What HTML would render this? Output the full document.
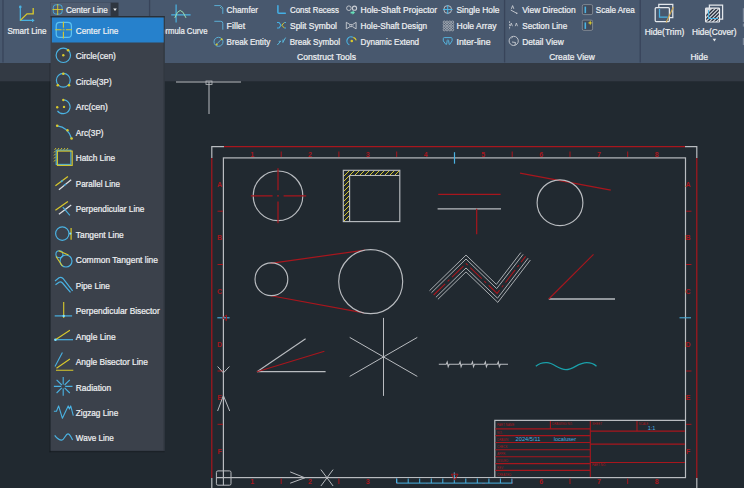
<!DOCTYPE html><html><head><meta charset="utf-8"><style>html,body{margin:0;padding:0;background:#212930;overflow:hidden}svg{display:block}text{font-family:"Liberation Sans",sans-serif}</style></head><body>
<svg width="744" height="488" viewBox="0 0 744 488">
<rect x="0" y="0" width="744" height="488" fill="#212930"/>
<rect x="0" y="0" width="744" height="63" fill="#48586e"/>
<rect x="0" y="63" width="744" height="18.3" fill="#333a44"/>
<line x1="3" y1="0" x2="3" y2="62.5" stroke="#38445a" stroke-width="1.3"/>
<line x1="149.6" y1="0" x2="149.6" y2="62.5" stroke="#38445a" stroke-width="1.3"/>
<line x1="504.6" y1="0" x2="504.6" y2="62.5" stroke="#38445a" stroke-width="1.3"/>
<line x1="640.2" y1="0" x2="640.2" y2="62.5" stroke="#38445a" stroke-width="1.3"/>
<g fill="none" stroke-linecap="butt">
<line x1="176" y1="82" x2="241" y2="82" stroke="#b9bcc0" stroke-width="1"/>
<line x1="209" y1="82" x2="209" y2="114" stroke="#b9bcc0" stroke-width="1"/>
<rect x="206" y="81" width="6" height="3.5" stroke="#b9bcc0" stroke-width="0.8"/>
<path d="M211.8,158 V478 M224,146.6 H685 M696.8,158 V478" stroke="#a8161d" stroke-width="1.2"/>
<path d="M211.8,158 V146.6 H224" stroke="#b9bcc0" stroke-width="1.2"/>
<path d="M685,146.6 H696.8 V158" stroke="#b9bcc0" stroke-width="1.2"/>
<path d="M211.8,478 V490" stroke="#b9bcc0" stroke-width="1.2"/>
<path d="M696.8,478 V490" stroke="#b9bcc0" stroke-width="1.2"/>
<rect x="223.4" y="157.9" width="462.1" height="319.70000000000005" stroke="#b9bcc0" stroke-width="1.2"/>
</g>
<g font-size="7" fill="#a8161d" font-weight="bold">
<text x="252.3" y="156.9" text-anchor="middle">1</text>
<text x="252.3" y="483.6" text-anchor="middle">1</text>
<text x="310.0" y="156.9" text-anchor="middle">2</text>
<text x="310.0" y="483.6" text-anchor="middle">2</text>
<text x="367.8" y="156.9" text-anchor="middle">3</text>
<text x="367.8" y="483.6" text-anchor="middle">3</text>
<text x="425.6" y="156.9" text-anchor="middle">4</text>
<text x="425.6" y="483.6" text-anchor="middle">4</text>
<text x="483.3" y="156.9" text-anchor="middle">5</text>
<text x="483.3" y="483.6" text-anchor="middle">5</text>
<text x="541.1" y="156.9" text-anchor="middle">6</text>
<text x="541.1" y="483.6" text-anchor="middle">6</text>
<text x="598.9" y="156.9" text-anchor="middle">7</text>
<text x="598.9" y="483.6" text-anchor="middle">7</text>
<text x="656.6" y="156.9" text-anchor="middle">8</text>
<text x="656.6" y="483.6" text-anchor="middle">8</text>
<text x="219.6" y="187.1" text-anchor="middle">A</text>
<text x="688.1" y="187.1" text-anchor="middle">A</text>
<text x="219.6" y="240.4" text-anchor="middle">B</text>
<text x="688.1" y="240.4" text-anchor="middle">B</text>
<text x="219.6" y="293.7" text-anchor="middle">C</text>
<text x="688.1" y="293.7" text-anchor="middle">C</text>
<text x="219.6" y="347.0" text-anchor="middle">D</text>
<text x="688.1" y="347.0" text-anchor="middle">D</text>
<text x="219.6" y="400.3" text-anchor="middle">E</text>
<text x="688.1" y="400.3" text-anchor="middle">E</text>
<text x="219.6" y="453.6" text-anchor="middle">F</text>
<text x="688.1" y="453.6" text-anchor="middle">F</text>
</g>
<g fill="none">
<line x1="281.2" y1="151.5" x2="281.2" y2="157" stroke="#a8161d" stroke-width="1"/>
<line x1="281.2" y1="478.5" x2="281.2" y2="484" stroke="#a8161d" stroke-width="1"/>
<line x1="338.9" y1="151.5" x2="338.9" y2="157" stroke="#a8161d" stroke-width="1"/>
<line x1="338.9" y1="478.5" x2="338.9" y2="484" stroke="#a8161d" stroke-width="1"/>
<line x1="396.7" y1="151.5" x2="396.7" y2="157" stroke="#a8161d" stroke-width="1"/>
<line x1="396.7" y1="478.5" x2="396.7" y2="484" stroke="#a8161d" stroke-width="1"/>
<line x1="454.5" y1="152.2" x2="454.5" y2="163.7" stroke="#4ab2e2" stroke-width="1.2"/>
<line x1="512.2" y1="151.5" x2="512.2" y2="157" stroke="#a8161d" stroke-width="1"/>
<line x1="512.2" y1="478.5" x2="512.2" y2="484" stroke="#a8161d" stroke-width="1"/>
<line x1="570.0" y1="151.5" x2="570.0" y2="157" stroke="#a8161d" stroke-width="1"/>
<line x1="570.0" y1="478.5" x2="570.0" y2="484" stroke="#a8161d" stroke-width="1"/>
<line x1="627.7" y1="151.5" x2="627.7" y2="157" stroke="#a8161d" stroke-width="1"/>
<line x1="627.7" y1="478.5" x2="627.7" y2="484" stroke="#a8161d" stroke-width="1"/>
<line x1="217.5" y1="211.2" x2="223" y2="211.2" stroke="#a8161d" stroke-width="1"/>
<line x1="686" y1="211.2" x2="691.5" y2="211.2" stroke="#a8161d" stroke-width="1"/>
<line x1="217.5" y1="264.5" x2="223" y2="264.5" stroke="#a8161d" stroke-width="1"/>
<line x1="686" y1="264.5" x2="691.5" y2="264.5" stroke="#a8161d" stroke-width="1"/>
<line x1="217.3" y1="317.8" x2="229.6" y2="317.8" stroke="#4ab2e2" stroke-width="1.1"/>
<path d="M222.5,317.8 L226.5,315.1 V320.6 Z" stroke="#a8161d" stroke-width="0.9"/>
<line x1="679.5" y1="317.8" x2="691" y2="317.8" stroke="#4ab2e2" stroke-width="1"/>
<line x1="217.5" y1="371.0" x2="223" y2="371.0" stroke="#a8161d" stroke-width="1"/>
<line x1="686" y1="371.0" x2="691.5" y2="371.0" stroke="#a8161d" stroke-width="1"/>
<line x1="217.5" y1="424.3" x2="223" y2="424.3" stroke="#a8161d" stroke-width="1"/>
<line x1="686" y1="424.3" x2="691.5" y2="424.3" stroke="#a8161d" stroke-width="1"/>
</g>
<g fill="none" stroke="#b9bcc0" stroke-width="1.15">
<circle cx="278" cy="195.8" r="24.8"/>
<path d="M278,168.3 V190.3 M278,201.5 V223.2 M250.8,195.8 H272.6 M283.6,195.8 H306.2" stroke="#a8161d" stroke-width="1.2"/>
<circle cx="278" cy="195.8" r="0.9" fill="#a8161d" stroke="none"/>
<defs><clipPath id="hc"><path d="M343.3,170.3 H399.8 V175.5 H349.6 V221.6 H343.3 Z"/></clipPath></defs>
<path d="M270,230 L340,160 M275,230 L345,160 M280,230 L350,160 M285,230 L355,160 M290,230 L360,160 M295,230 L365,160 M300,230 L370,160 M305,230 L375,160 M310,230 L380,160 M315,230 L385,160 M320,230 L390,160 M325,230 L395,160 M330,230 L400,160 M335,230 L405,160 M340,230 L410,160 M345,230 L415,160 M350,230 L420,160 M355,230 L425,160 M360,230 L430,160 M365,230 L435,160 M370,230 L440,160 M375,230 L445,160 M380,230 L450,160 M385,230 L455,160 M390,230 L460,160 M395,230 L465,160 M400,230 L470,160 M405,230 L475,160 M410,230 L480,160 M415,230 L485,160" stroke="#d9c92c" stroke-width="1" clip-path="url(#hc)"/>
<rect x="343.3" y="170.3" width="56.5" height="51.3"/>
<path d="M349.6,221.6 V175.5 H399.8"/>
<line x1="438.2" y1="194.4" x2="500.6" y2="194.4" stroke="#a8161d" stroke-width="1.2"/>
<line x1="437.6" y1="208.8" x2="501" y2="208.8" stroke-width="1.3"/>
<line x1="476.7" y1="208.8" x2="476.7" y2="234.3" stroke="#a8161d" stroke-width="1.2"/>
<line x1="520" y1="173.1" x2="610.8" y2="190.1" stroke="#a8161d" stroke-width="1.2"/>
<circle cx="560" cy="202.7" r="22.9"/>
<line x1="270.6" y1="263.3" x2="365" y2="250.1" stroke="#a8161d" stroke-width="1.2"/>
<line x1="269.7" y1="295.5" x2="363.8" y2="312.9" stroke="#a8161d" stroke-width="1.2"/>
<circle cx="271.4" cy="279.2" r="16.4"/>
<circle cx="370.7" cy="281.6" r="32"/>
<polyline points="429.5,290.7 466.0,255.1 496.4,284.4 520.8,252.6" stroke-width="0.9"/>
<polyline points="431.5,292.7 466.0,259.0 496.7,288.6 523.1,254.4" stroke-width="0.9"/>
<polyline points="435.9,297.3 466.0,268.0 497.5,298.2 528.1,258.2" stroke-width="0.9"/>
<polyline points="437.9,299.3 466.0,271.9 497.8,302.4 530.4,260.0" stroke-width="0.9"/>
<polyline points="433.7,295 466,263.5 497.1,293.4 525.6,256.3" stroke="#a8161d" stroke-width="1.1" stroke-dasharray="16,3.5,2.5,3.5"/>
<line x1="548.8" y1="299" x2="615" y2="299" stroke-width="1.3"/>
<line x1="548.8" y1="299" x2="593.5" y2="254.4" stroke="#a8161d" stroke-width="1.1"/>
<line x1="257" y1="371.7" x2="325.6" y2="371.7" stroke-width="1.2"/>
<line x1="257" y1="371.7" x2="305.6" y2="338.7" stroke-width="1.1"/>
<line x1="257" y1="371.7" x2="324.4" y2="351.2" stroke="#a8161d" stroke-width="1.1"/>
<line x1="383.5" y1="317.9" x2="383.5" y2="395.9" stroke-width="1"/>
<line x1="349.7" y1="337.4" x2="417.3" y2="376.4" stroke-width="1"/>
<line x1="417.3" y1="337.4" x2="349.7" y2="376.4" stroke-width="1"/>
<path d="M438.8,364.3 L446.2,364.3 L447.2,362 L448.2,366.7 L449.2,364.3 L459.1,364.3 L460.1,362 L461.1,366.7 L462.1,364.3 L471.5,364.3 L472.5,362 L473.5,366.7 L474.5,364.3 L484.4,364.3 L485.4,362 L486.4,366.7 L487.4,364.3 L497.3,364.3 L498.3,362 L499.3,366.7 L500.3,364.3 L508,364.3" stroke-width="1.1"/>
<path d="M535.8,366.3 C539,363.5 543,362.5 547,362.7 C554,363 558,369.6 565.9,369.6 C573.5,369.6 578,362.7 586.8,362.7 C591,362.7 594,364 596.5,366.3" stroke="#1aa0aa" stroke-width="1.3"/>
<path d="M217.6,366.5 L223.4,372.9 L229.4,366.5" stroke-width="1"/>
<path d="M217.6,411 L223.4,395.6 L229.7,411" stroke-width="1"/>
<path d="M290.2,471.9 L304.9,477.8 L290.2,483.2" stroke-width="1"/>
<path d="M320.9,469.6 L333.1,486 M333.1,469.6 L320.9,486" stroke-width="1"/>
<rect x="216.4" y="470.9" width="14.6" height="14.3" rx="1.5" stroke-width="1"/>
<path d="M223.4,477 V485.2 M216.4,477.6 H224" stroke-width="1.1"/>
<rect x="396.7" y="478.3" width="115.7" height="4.8" fill="#212930" stroke="none"/>
<path d="M396.7,478.5 V483.1 H512.4" stroke="#4ab2e2" stroke-width="1"/>
<line x1="396.7" y1="478.5" x2="396.7" y2="483.1" stroke="#4ab2e2" stroke-width="1"/>
<line x1="408.2" y1="478.5" x2="408.2" y2="483.1" stroke="#4ab2e2" stroke-width="1"/>
<line x1="419.7" y1="478.5" x2="419.7" y2="483.1" stroke="#4ab2e2" stroke-width="1"/>
<line x1="431.3" y1="478.5" x2="431.3" y2="483.1" stroke="#4ab2e2" stroke-width="1"/>
<line x1="442.8" y1="478.5" x2="442.8" y2="483.1" stroke="#4ab2e2" stroke-width="1"/>
<line x1="454.3" y1="472.4" x2="454.3" y2="483.1" stroke="#4ab2e2" stroke-width="1"/>
<line x1="465.8" y1="478.5" x2="465.8" y2="483.1" stroke="#4ab2e2" stroke-width="1"/>
<line x1="477.3" y1="478.5" x2="477.3" y2="483.1" stroke="#4ab2e2" stroke-width="1"/>
<line x1="488.9" y1="478.5" x2="488.9" y2="483.1" stroke="#4ab2e2" stroke-width="1"/>
<line x1="500.4" y1="478.5" x2="500.4" y2="483.1" stroke="#4ab2e2" stroke-width="1"/>
<line x1="511.9" y1="478.5" x2="511.9" y2="483.1" stroke="#4ab2e2" stroke-width="1"/>
<path d="M451.4,474.2 H458 L454.7,480.1 Z" stroke="#a8161d" stroke-width="1"/>
<path d="M494.8,477.6 V420.4 H685.5" stroke-width="1.2"/>
<line x1="495.4" y1="428.9" x2="590.3" y2="428.9" stroke="#a8161d" stroke-width="1.1"/>
<line x1="495.4" y1="435.6" x2="590.3" y2="435.6" stroke="#a8161d" stroke-width="1.1"/>
<line x1="495.4" y1="442.5" x2="590.3" y2="442.5" stroke="#a8161d" stroke-width="1.1"/>
<line x1="495.4" y1="449.7" x2="590.3" y2="449.7" stroke="#a8161d" stroke-width="1.1"/>
<line x1="495.4" y1="456.7" x2="590.3" y2="456.7" stroke="#a8161d" stroke-width="1.1"/>
<line x1="495.4" y1="463.6" x2="590.3" y2="463.6" stroke="#a8161d" stroke-width="1.1"/>
<line x1="495.4" y1="470.4" x2="590.3" y2="470.4" stroke="#a8161d" stroke-width="1.1"/>
<line x1="550.4" y1="421" x2="550.4" y2="428.9" stroke="#a8161d" stroke-width="1.1"/>
<line x1="590.3" y1="421" x2="590.3" y2="477" stroke="#a8161d" stroke-width="1.1"/>
<line x1="637" y1="421" x2="637" y2="431.1" stroke="#a8161d" stroke-width="1.1"/>
<line x1="590.3" y1="431.1" x2="685" y2="431.1" stroke="#a8161d" stroke-width="1.1"/>
<line x1="590.3" y1="444.1" x2="685" y2="444.1" stroke="#a8161d" stroke-width="1.1"/>
<line x1="590.3" y1="462.5" x2="685" y2="462.5" stroke="#a8161d" stroke-width="1.1"/>
</g>
<g font-size="3" fill="#a8161d">
<text x="497" y="425.5">PART NAME</text>
<text x="497" y="433.5">NO.</text>
<text x="497" y="440.5">DRAWN</text>
<text x="497" y="447.5">CHECK</text>
<text x="497" y="454.5">APPR.</text>
<text x="497" y="461.5">ISSUED</text>
<text x="497" y="468.5">REV</text>
<text x="497" y="475.5">CREATED</text>
<text x="552" y="425">DRAWING NO.</text><text x="592" y="425">SHEET</text><text x="638.5" y="425">SCALE</text><text x="592" y="466">PART NO.</text>
</g>
<g fill="#4ab2e2" font-size="6.2">
<text x="515.6" y="441.3" textLength="24.8" lengthAdjust="spacingAndGlyphs">2024/5/11</text>
<text x="553.7" y="441.3" textLength="22.3" lengthAdjust="spacingAndGlyphs">localuser</text>
<text x="647.7" y="429.5" textLength="7.7" lengthAdjust="spacingAndGlyphs">1:1</text>
</g>
<g fill="none" stroke-width="1.2">
<path d="M20.3,6.9 V20.4 H33.5" stroke="#4ab2e2"/>
<circle cx="20.3" cy="6.9" r="1.3" fill="#4ab2e2" stroke="none"/>
<path d="M32,18.6 L34.6,20.4 L32,22.2 Z" fill="#4ab2e2" stroke="none"/>
<path d="M20.3,20.4 L27,13.8 H33.2 V8" stroke="#d9c92c" stroke-width="1.3"/>
</g>
<text x="7.4" y="33.6" font-size="8.3" fill="#eef0f2" stroke="#eef0f2" stroke-width="0.22" text-anchor="start" textLength="39" lengthAdjust="spacingAndGlyphs">Smart Line</text>
<rect x="50.6" y="2.6" width="60.2" height="13.5" fill="#4f5c70" stroke="#414d5f" stroke-width="0.6"/>
<rect x="110.8" y="2.6" width="7.7" height="13.5" fill="#2f3640"/>
<path d="M113.2,8.4 H116.8 L115,11 Z" fill="#f0f0f0"/>
<g fill="none" stroke-width="0.9"><rect x="53.3" y="4.8" width="8.8" height="9.3" rx="2.5" stroke="#4ab2e2"/><path d="M57.7,4 V15 M52.5,9.5 H63" stroke="#d9c92c"/></g>
<text x="65.9" y="13.1" font-size="8.3" fill="#eef0f2" stroke="#eef0f2" stroke-width="0.22" text-anchor="start" textLength="42" lengthAdjust="spacingAndGlyphs">Center Line</text>
<g fill="none" stroke-width="1.2"><path d="M176.1,4.6 V22.5 M171.2,14.9 H190.6" stroke="#4ab2e2"/><path d="M174.8,17.9 Q180,3 186,17.9" stroke="#9be0b0" stroke-width="1"/></g>
<text x="207.5" y="34.3" font-size="8.3" fill="#eef0f2" stroke="#eef0f2" stroke-width="0.22" text-anchor="end" textLength="51.1" lengthAdjust="spacingAndGlyphs">Formula Curve</text>
<g fill="none" stroke="#5aaed4" stroke-width="1">
<path d="M214.3,5.6 H220.5 L222.8,7.9 V13.8"/>
<path d="M220,7 L221.5,8.5" stroke="#8fd8c0" stroke-width="0.7"/>
<path d="M214.3,21.3 H220.8 Q222.8,21.3 222.8,23.3 V29.7"/>
<circle cx="218.5" cy="41.8" r="4.5"/><path d="M216.4,44.3 L221.4,39.3"/>
</g><g fill="#d9c92c"><circle cx="216.7" cy="44.4" r="1"/><circle cx="221.6" cy="39.3" r="1"/></g>
<text x="226.6" y="13.2" font-size="8.3" fill="#eef0f2" stroke="#eef0f2" stroke-width="0.22" text-anchor="start" textLength="31.4" lengthAdjust="spacingAndGlyphs">Chamfer</text>
<text x="226.6" y="29" font-size="8.3" fill="#eef0f2" stroke="#eef0f2" stroke-width="0.22" text-anchor="start" textLength="18.6" lengthAdjust="spacingAndGlyphs">Fillet</text>
<text x="226.6" y="45" font-size="8.3" fill="#eef0f2" stroke="#eef0f2" stroke-width="0.22" text-anchor="start" textLength="43.6" lengthAdjust="spacingAndGlyphs">Break Entity</text>
<g fill="none" stroke="#44b0e6" stroke-width="1.5" stroke-linecap="round">
<path d="M277.9,5.8 V12.6 Q277.9,13.3 278.8,13.3 H285.3"/>
<path d="M277,22.5 H279 L281,25.2 L279,28 H277 M286,22.5 H284.2 M286,28 H284.2" stroke-width="1.1" stroke-linecap="butt"/>
<path d="M277.3,45 L281,40.9 M278.7,41.3 H281 M282.8,42.4 L285.6,37.6 M283,39.5 V42.6" stroke="#5ab8dc" stroke-width="1" stroke-linecap="butt"/>
</g><path d="M284.2,22.6 L281.8,25.2 L284.2,27.9" fill="none" stroke="#d9c92c" stroke-width="1"/>
<text x="290" y="13.2" font-size="8.3" fill="#eef0f2" stroke="#eef0f2" stroke-width="0.22" text-anchor="start" textLength="49" lengthAdjust="spacingAndGlyphs">Const Recess</text>
<text x="290" y="29" font-size="8.3" fill="#eef0f2" stroke="#eef0f2" stroke-width="0.22" text-anchor="start" textLength="47" lengthAdjust="spacingAndGlyphs">Split Symbol</text>
<text x="289.7" y="45" font-size="8.3" fill="#eef0f2" stroke="#eef0f2" stroke-width="0.22" text-anchor="start" textLength="50.3" lengthAdjust="spacingAndGlyphs">Break Symbol</text>
<text x="326.5" y="59.9" font-size="8.3" fill="#eef0f2" stroke="#eef0f2" stroke-width="0.22" text-anchor="middle" textLength="59" lengthAdjust="spacingAndGlyphs">Construct Tools</text>
<g fill="none" stroke="#c9cdd3" stroke-width="0.9">
<circle cx="348.9" cy="8.2" r="2.3"/><circle cx="354.5" cy="8.2" r="2.1" stroke-width="1.1"/>
<path d="M346.3,22.3 V28.9 M356.1,22.3 V28.9 M346.3,22.3 L350,24.6 H352.5 L356.1,22.3 M346.3,28.9 L350,26.6 H352.5 L356.1,28.9"/>
<path d="M349,25.6 H353.5" stroke-width="0.7" stroke-dasharray="1,0.8"/>
</g>
<path d="M350.6,11.7 H352.6 V10.4 L355,12.6 L352.6,14.8 V13.5 H350.6 Z" fill="#66e0b8"/>
<g fill="none" stroke-width="1.2"><path d="M349.3,44.8 A4.1,4.1 0 0 1 352.9,37.2" stroke="#4ab4e4"/><path d="M353.3,37.3 A4.1,4.1 0 0 1 356.2,40.4" stroke="#d9c92c"/></g><circle cx="351.8" cy="41" r="1.3" fill="#d9c92c"/>
<text x="360.6" y="13.2" font-size="8.3" fill="#eef0f2" stroke="#eef0f2" stroke-width="0.22" text-anchor="start" textLength="76.5" lengthAdjust="spacingAndGlyphs">Hole-Shaft Projector</text>
<text x="360.6" y="29" font-size="8.3" fill="#eef0f2" stroke="#eef0f2" stroke-width="0.22" text-anchor="start" textLength="66.5" lengthAdjust="spacingAndGlyphs">Hole-Shaft Design</text>
<text x="360.6" y="45" font-size="8.3" fill="#eef0f2" stroke="#eef0f2" stroke-width="0.22" text-anchor="start" textLength="58.5" lengthAdjust="spacingAndGlyphs">Dynamic Extend</text>
<g fill="none" stroke-width="1"><circle cx="447.7" cy="9.5" r="3.9" stroke="#b8bcc2"/><path d="M447.7,5 V14.1 M443,9.5 H452.5" stroke="#4ab4e4"/></g>
<g fill="none" stroke="#b8bcc2" stroke-width="0.7">
<circle cx="444.30" cy="22.10" r="1.15"/>
<circle cx="447.05" cy="22.10" r="1.15"/>
<circle cx="449.80" cy="22.10" r="1.15"/>
<circle cx="452.55" cy="22.10" r="1.15"/>
<circle cx="444.30" cy="24.65" r="1.15"/>
<circle cx="447.05" cy="24.65" r="1.15"/>
<circle cx="449.80" cy="24.65" r="1.15"/>
<circle cx="452.55" cy="24.65" r="1.15"/>
<circle cx="444.30" cy="27.20" r="1.15"/>
<circle cx="447.05" cy="27.20" r="1.15"/>
<circle cx="449.80" cy="27.20" r="1.15"/>
<circle cx="452.55" cy="27.20" r="1.15"/>
<circle cx="444.30" cy="29.75" r="1.15"/>
<circle cx="447.05" cy="29.75" r="1.15"/>
<circle cx="449.80" cy="29.75" r="1.15"/>
<circle cx="452.55" cy="29.75" r="1.15"/>
</g>
<path d="M443.3,40.9 V38.6 Q443.3,37.6 444.3,37.6 H451.1 Q452.1,37.6 452.1,38.6 V40.9 L449.6,44.6 M443.3,40.9 L446,44.6 M446.6,44.6 L447.2,40.5 Q447.9,39 448.6,40.5 L449.2,44.6" fill="none" stroke="#56b4de" stroke-width="1"/>
<text x="456.5" y="13.2" font-size="8.3" fill="#eef0f2" stroke="#eef0f2" stroke-width="0.22" text-anchor="start" textLength="43" lengthAdjust="spacingAndGlyphs">Single Hole</text>
<text x="456.5" y="29" font-size="8.3" fill="#eef0f2" stroke="#eef0f2" stroke-width="0.22" text-anchor="start" textLength="40" lengthAdjust="spacingAndGlyphs">Hole Array</text>
<text x="456.5" y="45" font-size="8.3" fill="#eef0f2" stroke="#eef0f2" stroke-width="0.22" text-anchor="start" textLength="34" lengthAdjust="spacingAndGlyphs">Inter-line</text>
<g fill="none" stroke="#c9cdd3" stroke-width="0.9">
<path d="M510.7,10 L516.8,13.3 M511.4,8.8 L512.6,5.6 L513.8,8.8"/>
<circle cx="516.8" cy="13.3" r="0.8" fill="#c9cdd3" stroke="none"/>
<path d="M509.6,21.3 V29.8" stroke-dasharray="1.6,1.2"/>
<path d="M510.2,26.2 L511.3,23 L512.4,26.2 M515.3,26.2 L516.4,23 L517.5,26.2" stroke-width="0.8"/>
<circle cx="513.7" cy="40.9" r="4.6"/><path d="M512,42 L515.5,42.5 L515,45 M511.5,38 L512.5,37.5"/>
</g>
<text x="522.2" y="13.2" font-size="8.3" fill="#eef0f2" stroke="#eef0f2" stroke-width="0.22" text-anchor="start" textLength="53.4" lengthAdjust="spacingAndGlyphs">View Direction</text>
<text x="522.2" y="29" font-size="8.3" fill="#eef0f2" stroke="#eef0f2" stroke-width="0.22" text-anchor="start" textLength="45" lengthAdjust="spacingAndGlyphs">Section Line</text>
<text x="522.2" y="45" font-size="8.3" fill="#eef0f2" stroke="#eef0f2" stroke-width="0.22" text-anchor="start" textLength="41.5" lengthAdjust="spacingAndGlyphs">Detail View</text>
<text x="572" y="59.9" font-size="8.3" fill="#eef0f2" stroke="#eef0f2" stroke-width="0.22" text-anchor="middle" textLength="45.4" lengthAdjust="spacingAndGlyphs">Create View</text>
<g>
<rect x="582.3" y="4.6" width="10.3" height="10" rx="1.5" fill="#404a5a" stroke="#8d939c" stroke-width="0.8"/>
<rect x="584.5" y="6.6" width="1.6" height="6.5" fill="#4ab2e2"/>
<rect x="582.3" y="20.1" width="10.3" height="10.3" rx="1.5" fill="#404a5a" stroke="#8d939c" stroke-width="0.8"/>
<rect x="584.5" y="22.4" width="1.6" height="6.5" fill="#4ab2e2"/>
<path d="M590.2,20.3 L590.9,22.2 L592.8,22.9 L590.9,23.6 L590.2,25.5 L589.5,23.6 L587.6,22.9 L589.5,22.2 Z" fill="#d9c92c"/>
</g>
<text x="595.8" y="13.2" font-size="8.3" fill="#eef0f2" stroke="#eef0f2" stroke-width="0.22" text-anchor="start" textLength="38.9" lengthAdjust="spacingAndGlyphs">Scale Area</text>
<g fill="none" stroke="#e3e7ec" stroke-width="1.25">
<path d="M669.4,17.7 H672.8 V4.3 H658.8 V7.7"/>
<rect x="655.2" y="7.7" width="14.2" height="13.8" rx="1"/>
<path d="M659.5,9.1 V17.2 H667.7" stroke="#4ab2e2"/>
<line x1="673.4" y1="7" x2="666.1" y2="22.6" stroke="#d0a850" stroke-width="1.1"/>
<path d="M719.5,19 H722.6 V5.1 H709.4 V8.2"/>
</g>
<defs><clipPath id="hcv"><rect x="705.6" y="8.2" width="13.9" height="13.8"/></clipPath></defs>
<rect x="705.6" y="8.2" width="13.9" height="13.8" fill="#d4d8dd"/>
<path d="M696.0,26 L716.0,6 M699.6,26 L719.6,6 M703.2,26 L723.2,6 M706.8,26 L726.8,6 M710.4,26 L730.4,6 M714.0,26 L734.0,6 M717.6,26 L737.6,6 M721.2,26 L741.2,6 M724.8,26 L744.8,6 M728.4,26 L748.4,6 M732.0,26 L752.0,6 M735.6,26 L755.6,6" stroke="#2a3140" stroke-width="1.4" clip-path="url(#hcv)"/>
<path d="M708.6,10 V18.5 H718" fill="none" stroke="#4ab2e2" stroke-width="1.1"/>
<rect x="705.6" y="8.2" width="13.9" height="13.8" rx="0.8" fill="none" stroke="#e6e9ed" stroke-width="1.2"/>
<text x="664.5" y="34.7" font-size="8.3" fill="#eef0f2" stroke="#eef0f2" stroke-width="0.22" text-anchor="middle" textLength="39.7" lengthAdjust="spacingAndGlyphs">Hide(Trim)</text>
<text x="714.3" y="34.7" font-size="8.3" fill="#eef0f2" stroke="#eef0f2" stroke-width="0.22" text-anchor="middle" textLength="44.7" lengthAdjust="spacingAndGlyphs">Hide(Cover)</text>
<path d="M712.6,38.8 H716.2 L714.4,41.6 Z" fill="#e6e8eb"/>
<text x="699.2" y="59.5" font-size="8.3" fill="#eef0f2" stroke="#eef0f2" stroke-width="0.22" text-anchor="middle" textLength="17.5" lengthAdjust="spacingAndGlyphs">Hide</text>
<rect x="742.8" y="8.2" width="1.2" height="13.8" fill="#7a8698"/><rect x="742.8" y="23.6" width="1.2" height="3" fill="#7a8698"/><rect x="742.8" y="38" width="1.2" height="7" fill="#7a8698"/>
<rect x="49.4" y="63" width="1.2" height="389.3" fill="#000" opacity="0.18"/>
<rect x="49.4" y="450.8" width="115.2" height="1.5" fill="#000" opacity="0.18"/>
<rect x="50.6" y="16" width="114.0" height="434.8" fill="#3b414b"/>
<path d="M164.1,16 V450.8" stroke="#2e343d" stroke-width="1"/>
<rect x="50.6" y="16" width="114.0" height="1.6" fill="#2a3038"/>
<rect x="51.9" y="17.5" width="111.8" height="25" fill="#2681cc"/>
<text x="75.8" y="33.9" font-size="8.3" fill="#eef0f2" stroke="#eef0f2" stroke-width="0.22" textLength="42.5" lengthAdjust="spacingAndGlyphs">Center Line</text>
<text x="75.8" y="59.4" font-size="8.3" fill="#eef0f2" stroke="#eef0f2" stroke-width="0.22" textLength="40" lengthAdjust="spacingAndGlyphs">Circle(cen)</text>
<text x="75.8" y="84.8" font-size="8.3" fill="#eef0f2" stroke="#eef0f2" stroke-width="0.22" textLength="35.8" lengthAdjust="spacingAndGlyphs">Circle(3P)</text>
<text x="75.8" y="110.3" font-size="8.3" fill="#eef0f2" stroke="#eef0f2" stroke-width="0.22" textLength="32" lengthAdjust="spacingAndGlyphs">Arc(cen)</text>
<text x="75.8" y="135.8" font-size="8.3" fill="#eef0f2" stroke="#eef0f2" stroke-width="0.22" textLength="27.8" lengthAdjust="spacingAndGlyphs">Arc(3P)</text>
<text x="75.8" y="161.2" font-size="8.3" fill="#eef0f2" stroke="#eef0f2" stroke-width="0.22" textLength="39.4" lengthAdjust="spacingAndGlyphs">Hatch Line</text>
<text x="75.8" y="186.7" font-size="8.3" fill="#eef0f2" stroke="#eef0f2" stroke-width="0.22" textLength="44.2" lengthAdjust="spacingAndGlyphs">Parallel Line</text>
<text x="75.8" y="212.2" font-size="8.3" fill="#eef0f2" stroke="#eef0f2" stroke-width="0.22" textLength="68.6" lengthAdjust="spacingAndGlyphs">Perpendicular Line</text>
<text x="75.8" y="237.7" font-size="8.3" fill="#eef0f2" stroke="#eef0f2" stroke-width="0.22" textLength="48" lengthAdjust="spacingAndGlyphs">Tangent Line</text>
<text x="75.8" y="263.1" font-size="8.3" fill="#eef0f2" stroke="#eef0f2" stroke-width="0.22" textLength="82.2" lengthAdjust="spacingAndGlyphs">Common Tangent line</text>
<text x="75.8" y="288.6" font-size="8.3" fill="#eef0f2" stroke="#eef0f2" stroke-width="0.22" textLength="34" lengthAdjust="spacingAndGlyphs">Pipe Line</text>
<text x="75.8" y="314.1" font-size="8.3" fill="#eef0f2" stroke="#eef0f2" stroke-width="0.22" textLength="84" lengthAdjust="spacingAndGlyphs">Perpendicular Bisector</text>
<text x="75.8" y="339.5" font-size="8.3" fill="#eef0f2" stroke="#eef0f2" stroke-width="0.22" textLength="39.8" lengthAdjust="spacingAndGlyphs">Angle Line</text>
<text x="75.8" y="365.0" font-size="8.3" fill="#eef0f2" stroke="#eef0f2" stroke-width="0.22" textLength="72" lengthAdjust="spacingAndGlyphs">Angle Bisector Line</text>
<text x="75.8" y="390.5" font-size="8.3" fill="#eef0f2" stroke="#eef0f2" stroke-width="0.22" textLength="35.4" lengthAdjust="spacingAndGlyphs">Radiation</text>
<text x="75.8" y="415.9" font-size="8.3" fill="#eef0f2" stroke="#eef0f2" stroke-width="0.22" textLength="42.4" lengthAdjust="spacingAndGlyphs">Zigzag Line</text>
<text x="75.8" y="441.4" font-size="8.3" fill="#eef0f2" stroke="#eef0f2" stroke-width="0.22" textLength="38" lengthAdjust="spacingAndGlyphs">Wave Line</text>
<g fill="none" stroke-width="1.1">
<rect x="56.2" y="22.4" width="15.2" height="15" rx="3.5" stroke="#5cc3f2" stroke-width="1.2"/>
<path d="M63.4,21.7 V27.5 M63.4,32 V38.4 M55.2,29.8 H61 M66,29.8 H71.9" stroke="#d9c92c" stroke-width="1.1"/>
<path d="M63.4,27.5 V32 M61,29.8 H66" stroke="#d9c92c" stroke-width="0.8" stroke-dasharray="0.8,0.8"/>
<circle cx="63.3" cy="55.3" r="7.2" stroke="#4ab2e2" stroke-width="1.2"/>
<circle cx="63.3" cy="80.2" r="6.9" stroke="#4ab2e2" stroke-width="1.2"/>
<path d="M63.3,99.9 A6.9,6.9 0 1 1 57.5,110.8" stroke="#4ab2e2" stroke-width="1.2"/>
<path d="M57.2,125.8 Q68,127 71.6,138.5" stroke="#4ab2e2" stroke-width="1.3"/>
<rect x="56.2" y="150.2" width="14.7" height="14.2" stroke="#4ab2e2" stroke-width="1.1"/>
<rect x="57.4" y="151.1" width="14.8" height="14.3" stroke="#d9c92c" stroke-width="1.1"/>
<path d="M54.6,149.8 L56,148 M57.6,149.8 L59,148 M60.6,149.8 L62,148 M63.6,149.8 L65,148 M66.6,149.8 L68,148 M54,152.5 L55.5,150.8 M54,155.5 L55.5,153.8 M54,158.5 L55.5,156.8 M54,161.5 L55.5,159.8" stroke="#d9c92c" stroke-width="0.9"/>
<path d="M55.4,185.7 L67.9,176.4" stroke="#d9c92c" stroke-width="1.2"/><path d="M58.9,189.7 L71.2,179.8" stroke="#dfe2e6" stroke-width="1.2"/>
<path d="M60.9,181.8 L62.7,180.4 M63.9,185.5 L65.7,184" stroke="#4ab2e2" stroke-width="1.5"/>
<path d="M55.4,210.3 L67.9,201.5" stroke="#d9c92c" stroke-width="1.2"/><path d="M58.9,214.2 L71.2,204.9" stroke="#dfe2e6" stroke-width="1.2"/><path d="M62.8,207.2 L69.9,215.4" stroke="#4ab2e2" stroke-width="1.1"/>
<circle cx="62.3" cy="233.6" r="6.7" stroke="#4ab2e2" stroke-width="1.2"/><path d="M71.1,227.9 V239.7" stroke="#d9c92c" stroke-width="1.2"/>
<circle cx="59.4" cy="254.3" r="3.5" stroke="#4ab2e2" stroke-width="1.1"/><circle cx="66" cy="261" r="6" stroke="#4ab2e2" stroke-width="1.2"/><path d="M58.6,250.8 L68.5,255.1 M56,256.5 L62.5,266.3" stroke="#d9c92c" stroke-width="1.1"/>
<path d="M55,281 L59,277.8 Q61,276.6 63,278.5 L72.6,290.9" stroke="#4ab2e2" stroke-width="1.2"/><path d="M55.5,284.8 L59,282.2 Q60.8,281.2 62.5,283 L70.5,292.3" stroke="#4ab2e2" stroke-width="1.2"/>
<path d="M63.7,301.9 V317.9" stroke="#d9c92c" stroke-width="1.1"/><path d="M54.7,315.9 H72.1" stroke="#4ab2e2" stroke-width="1.2"/>
<path d="M55.4,339.7 H73" stroke="#4ab2e2" stroke-width="1.2"/><path d="M55.4,339.7 L69.9,330.3" stroke="#d9c92c" stroke-width="1.1"/>
<path d="M55,366.4 L62.4,352.4" stroke="#4ab2e2" stroke-width="1.1"/><path d="M56.5,368.3 L69.9,359 M56,370.3 H73.3" stroke="#d9c92c" stroke-width="1.1"/>
<path d="M53.9,386.4 L61.2,386.4 M65.2,386.4 L72.5,386.4" stroke="#4ab2e2" stroke-width="1.1"/>
<path d="M56.6,379.8 L61.8,385.0 M64.6,387.8 L69.8,393.0" stroke="#4ab2e2" stroke-width="1.1"/>
<path d="M63.2,377.1 L63.2,384.4 M63.2,388.4 L63.2,395.7" stroke="#4ab2e2" stroke-width="1.1"/>
<path d="M69.8,379.8 L64.6,385.0 M61.8,387.8 L56.6,393.0" stroke="#4ab2e2" stroke-width="1.1"/>
<path d="M53.9,411.3 H56.5 L58.6,405.9 L62.4,418.3 L68.2,405.9 L69.4,409 L70.7,405.9 L73.3,415.7" stroke="#4ab2e2" stroke-width="1.1" stroke-linejoin="round"/>
<path d="M54.7,435.4 C57,438.5 59.5,440.1 61.7,440.1 C64.5,440.1 65.5,433.9 67.9,433.9 C70,433.9 71.3,437.5 72.6,440.1" stroke="#4ab2e2" stroke-width="1.2"/>
</g>
<circle cx="63.3" cy="55.3" r="1.2" fill="#d9c92c"/>
<circle cx="68.1" cy="50.2" r="1.3" fill="#d9c92c"/>
<circle cx="63.3" cy="73.8" r="1.3" fill="#d9c92c"/>
<circle cx="57.8" cy="85.3" r="1.3" fill="#d9c92c"/>
<circle cx="69" cy="85.3" r="1.3" fill="#d9c92c"/>
<circle cx="57.2" cy="107.3" r="1.2" fill="#d9c92c"/>
<circle cx="64" cy="106.9" r="1.2" fill="#d9c92c"/>
<circle cx="63.3" cy="100" r="1.2" fill="#d9c92c"/>
<circle cx="57.2" cy="125.8" r="1.3" fill="#d9c92c"/>
<circle cx="67.5" cy="130.3" r="1.2" fill="#d9c92c"/>
<circle cx="71.6" cy="138.5" r="1.3" fill="#d9c92c"/>
<circle cx="70.3" cy="233.6" r="1.1" fill="#7fe0ff"/>
<circle cx="63.7" cy="315.9" r="1.2" fill="#7fe0ff"/>
<circle cx="55.4" cy="339.7" r="1.3" fill="#7fe0ff"/>
</svg></body></html>
